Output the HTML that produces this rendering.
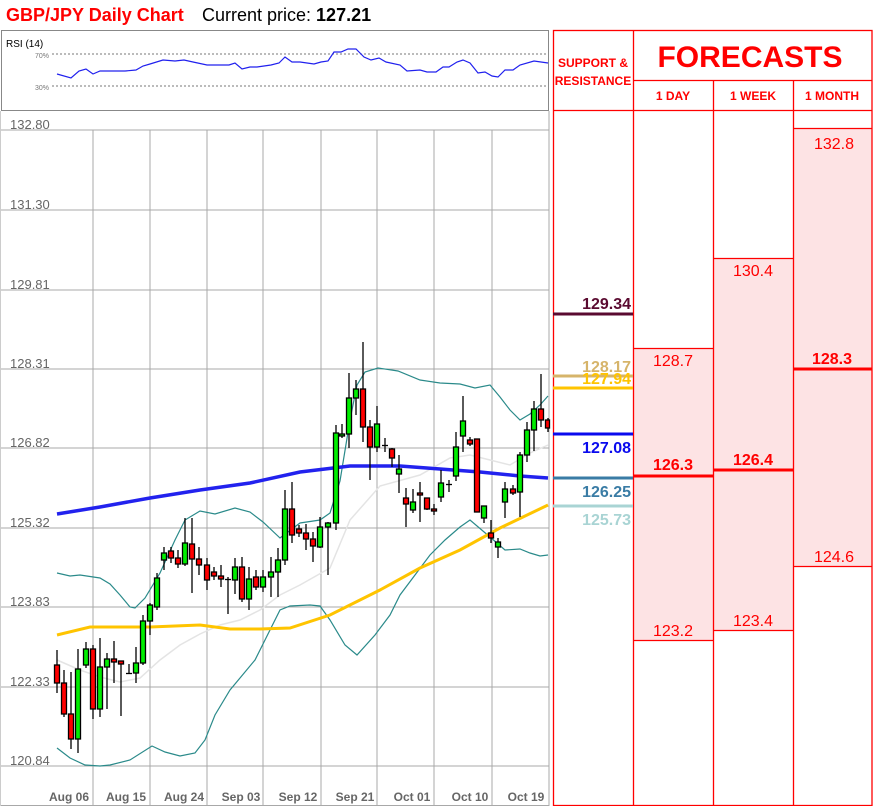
<!DOCTYPE html>
<html><head><meta charset="utf-8"><style>
body{margin:0;width:873px;height:806px;overflow:hidden;background:#fff;font-family:"Liberation Sans",sans-serif;}
</style></head><body>
<svg width="873" height="806" xmlns="http://www.w3.org/2000/svg" font-family="Liberation Sans, sans-serif">
<text x="6" y="21" font-size="18" font-weight="bold" fill="#ff0000">GBP/JPY Daily Chart</text>
<text x="202" y="21" font-size="18" fill="#000">Current price: <tspan font-weight="bold">127.21</tspan></text>
<!-- RSI -->
<rect x="1.5" y="30.5" width="547" height="80" fill="#fff" stroke="#888"/>
<text x="6" y="47" font-size="10" fill="#000">RSI (14)</text>
<line x1="52" y1="54" x2="548" y2="54" stroke="#777" stroke-dasharray="2,2"/>
<line x1="52" y1="86" x2="548" y2="86" stroke="#777" stroke-dasharray="2,2"/>
<text x="35" y="58" font-size="7" fill="#777">70%</text>
<text x="35" y="90" font-size="7" fill="#777">30%</text>
<polyline fill="none" stroke="#2020ee" stroke-width="1.2" points="57,74 71,78 79,71 86,69 93,74 100,71 125,71 136,70 143,66 150,64 163,60 175,61 184,60 193,62 207,65 229,65 235,63 242,69 250,67 257,67 271,65 279,63 285,57 292,62 300,62 314,64 321,62 328,61 334,52 341,52 348,49 356,49 364,57 371,60 379,58 386,62 400,65 407,71 420,70 427,72 436,72 443,67 449,67 457,62 463,60 470,63 478,73 485,72 492,76 498,77 505,70 513,70 520,65 534,61 548,63"/>
<!-- main chart grid -->
<g stroke="#a8a8a8" stroke-width="1">
<line x1="0" y1="130" x2="549" y2="130"/><line x1="0" y1="210" x2="549" y2="210"/><line x1="0" y1="290" x2="549" y2="290"/>
<line x1="0" y1="369" x2="549" y2="369"/><line x1="0" y1="448" x2="549" y2="448"/><line x1="0" y1="528" x2="549" y2="528"/>
<line x1="0" y1="607" x2="549" y2="607"/><line x1="0" y1="687" x2="549" y2="687"/><line x1="0" y1="766" x2="549" y2="766"/>
<line x1="93" y1="130" x2="93" y2="806"/><line x1="150" y1="130" x2="150" y2="806"/><line x1="207" y1="130" x2="207" y2="806"/>
<line x1="263" y1="130" x2="263" y2="806"/><line x1="321" y1="130" x2="321" y2="806"/><line x1="377" y1="130" x2="377" y2="806"/>
<line x1="434" y1="130" x2="434" y2="806"/><line x1="492" y1="130" x2="492" y2="806"/>
<line x1="549" y1="111" x2="549" y2="806"/><line x1="0" y1="805.5" x2="549" y2="805.5"/>
</g>
<line x1="0.5" y1="111" x2="0.5" y2="806" stroke="#ccc"/>
<g font-size="13" fill="#666">
<text x="10" y="129">132.80</text><text x="10" y="209">131.30</text><text x="10" y="289">129.81</text>
<text x="10" y="368">128.31</text><text x="10" y="447">126.82</text><text x="10" y="527">125.32</text>
<text x="10" y="606">123.83</text><text x="10" y="686">122.33</text><text x="10" y="765">120.84</text>
</g>
<g font-size="12" fill="#666" font-weight="bold" text-anchor="middle">
<text x="69" y="801">Aug 06</text><text x="126" y="801">Aug 15</text><text x="184" y="801">Aug 24</text>
<text x="241" y="801">Sep 03</text><text x="298" y="801">Sep 12</text><text x="355" y="801">Sep 21</text>
<text x="412" y="801">Oct 01</text><text x="470" y="801">Oct 10</text><text x="526" y="801">Oct 19</text>
</g>
<!-- indicator lines -->
<polyline fill="none" stroke="#e4e4e4" stroke-width="1.5" points="57,660 80,670 100,677 120,682 140,678 160,660 180,645 200,634 220,625 240,620 260,610 280,595 300,585 330,568 350,520 380,486 420,475 450,458 470,455 490,460 510,465 530,453 548,445"/>
<polyline fill="none" stroke="#2a8a8a" stroke-width="1.2" points="57,573 70,576 80,575 100,578 110,584 120,595 130,607 135,608 145,598 160,573 175,540 185,520 200,511 215,514 235,508 250,512 263,522 280,538 300,523 320,520 330,513 340,481 350,420 357,385 365,372 378,368 398,371 420,380 440,383 460,384 475,388 490,385 500,397 510,410 520,420 530,414 540,405 548,396"/>
<polyline fill="none" stroke="#2a8a8a" stroke-width="1.2" points="57,748 70,758 85,765 100,766 110,765 130,760 152,746 165,752 180,756 195,753 205,740 215,715 230,690 240,678 255,660 265,640 280,610 290,606 310,605 320,606 330,620 345,645 357,655 375,635 390,615 400,595 415,575 430,555 445,540 460,527 470,520 490,537 505,550 520,549 530,553 540,556 548,555"/>
<polyline fill="none" stroke="#ffc400" stroke-width="3" points="57,635 90,627 150,627 200,625 230,629 260,629 290,628 330,615 380,590 420,568 460,550 500,528 548,505"/>
<polyline fill="none" stroke="#2222ee" stroke-width="3.5" points="57,514 100,507 150,498 200,490 250,483 300,472 350,466 400,466 440,469 480,472 520,476 548,478"/>
<!-- candles -->
<g stroke="#000" stroke-width="1.3">
<line x1="57" y1="650" x2="57" y2="693"/><rect x="54.5" y="665" width="5" height="18" fill="#f00"/>
<line x1="64" y1="670" x2="64" y2="717"/><rect x="61.5" y="683" width="5" height="31" fill="#f00"/>
<line x1="71" y1="672" x2="71" y2="749"/><rect x="68.5" y="714" width="5" height="25" fill="#f00"/>
<line x1="78" y1="649" x2="78" y2="753"/><rect x="75.5" y="669" width="5" height="70" fill="#0e0"/>
<line x1="86" y1="642" x2="86" y2="668"/><rect x="83.5" y="649" width="5" height="16" fill="#0e0"/>
<line x1="93" y1="645" x2="93" y2="719"/><rect x="90.5" y="649" width="5" height="60" fill="#f00"/>
<line x1="100" y1="638" x2="100" y2="717"/><rect x="97.5" y="667" width="5" height="42" fill="#0e0"/>
<line x1="107" y1="653" x2="107" y2="709"/><rect x="104.5" y="659" width="5" height="8" fill="#0e0"/>
<line x1="114" y1="641" x2="114" y2="683"/><rect x="111.5" y="659" width="5" height="3" fill="#f00"/>
<line x1="121" y1="661" x2="121" y2="716"/><rect x="118.5" y="661" width="5" height="3" fill="#f00"/>
<line x1="129" y1="664" x2="129" y2="674"/><line x1="126" y1="673.5" x2="132" y2="673.5"/>
<line x1="136" y1="647" x2="136" y2="683"/><rect x="133.5" y="663" width="5" height="10" fill="#0e0"/>
<line x1="143" y1="615" x2="143" y2="665"/><rect x="140.5" y="621" width="5" height="42" fill="#0e0"/>
<line x1="150" y1="603" x2="150" y2="635"/><rect x="147.5" y="605" width="5" height="16" fill="#0e0"/>
<line x1="157" y1="573" x2="157" y2="610"/><rect x="154.5" y="578" width="5" height="29" fill="#0e0"/>
<line x1="164" y1="547" x2="164" y2="570"/><rect x="161.5" y="553" width="5" height="7" fill="#0e0"/>
<line x1="171" y1="547" x2="171" y2="563"/><rect x="168.5" y="551" width="5" height="7" fill="#f00"/>
<line x1="178" y1="550" x2="178" y2="568"/><rect x="175.5" y="558" width="5" height="6" fill="#f00"/>
<line x1="185" y1="518" x2="185" y2="566"/><rect x="182.5" y="543" width="5" height="21" fill="#0e0"/>
<line x1="192" y1="518" x2="192" y2="593"/><rect x="189.5" y="544" width="5" height="15" fill="#f00"/>
<line x1="199" y1="547" x2="199" y2="575"/><rect x="196.5" y="559" width="5" height="6" fill="#f00"/>
<line x1="207" y1="558" x2="207" y2="590"/><rect x="204.5" y="565" width="5" height="15" fill="#f00"/>
<line x1="214" y1="567" x2="214" y2="580"/><rect x="211.5" y="572" width="5" height="4" fill="#f00"/>
<line x1="221" y1="565" x2="221" y2="587"/><rect x="218.5" y="576" width="5" height="3" fill="#f00"/>
<line x1="228" y1="577" x2="228" y2="614"/><line x1="225" y1="579.5" x2="231" y2="579.5"/>
<line x1="235" y1="558" x2="235" y2="594"/><rect x="232.5" y="567" width="5" height="13" fill="#0e0"/>
<line x1="242" y1="557" x2="242" y2="602"/><rect x="239.5" y="567" width="5" height="32" fill="#f00"/>
<line x1="249" y1="567" x2="249" y2="610"/><rect x="246.5" y="579" width="5" height="20" fill="#0e0"/>
<line x1="256" y1="570" x2="256" y2="590"/><rect x="253.5" y="577" width="5" height="10" fill="#f00"/>
<line x1="263" y1="570" x2="263" y2="592"/><rect x="260.5" y="577" width="5" height="10" fill="#0e0"/>
<line x1="271" y1="557" x2="271" y2="597"/><rect x="268.5" y="572" width="5" height="5" fill="#0e0"/>
<line x1="278" y1="548" x2="278" y2="597"/><rect x="275.5" y="560" width="5" height="12" fill="#0e0"/>
<line x1="285" y1="490" x2="285" y2="565"/><rect x="282.5" y="509" width="5" height="51" fill="#0e0"/>
<line x1="292" y1="482" x2="292" y2="543"/><rect x="289.5" y="509" width="5" height="26" fill="#f00"/>
<line x1="299" y1="525" x2="299" y2="537"/><rect x="296.5" y="529" width="5" height="4" fill="#f00"/>
<line x1="306" y1="524" x2="306" y2="550"/><rect x="303.5" y="533" width="5" height="6" fill="#f00"/>
<line x1="313" y1="532" x2="313" y2="562"/><rect x="310.5" y="539" width="5" height="7" fill="#f00"/>
<line x1="320" y1="517" x2="320" y2="548"/><rect x="317.5" y="527" width="5" height="20" fill="#0e0"/>
<line x1="328" y1="522" x2="328" y2="575"/><rect x="325.5" y="523" width="5" height="4" fill="#0e0"/>
<line x1="336" y1="425" x2="336" y2="530"/><rect x="333.5" y="433" width="5" height="90" fill="#0e0"/>
<line x1="342" y1="424" x2="342" y2="438"/><rect x="339.5" y="434" width="5" height="2" fill="#0e0"/>
<line x1="349" y1="373" x2="349" y2="448"/><rect x="346.5" y="398" width="5" height="36" fill="#0e0"/>
<line x1="356" y1="380" x2="356" y2="415"/><rect x="353.5" y="389" width="5" height="9" fill="#0e0"/>
<line x1="363" y1="342" x2="363" y2="442"/><rect x="360.5" y="389" width="5" height="38" fill="#f00"/>
<line x1="370" y1="420" x2="370" y2="480"/><rect x="367.5" y="427" width="5" height="20" fill="#f00"/>
<line x1="377" y1="406" x2="377" y2="452"/><rect x="374.5" y="424" width="5" height="23" fill="#0e0"/>
<line x1="385" y1="438" x2="385" y2="452"/><line x1="382" y1="445.5" x2="388" y2="445.5"/>
<line x1="392" y1="448" x2="392" y2="467"/><rect x="389.5" y="449" width="5" height="9" fill="#f00"/>
<line x1="399" y1="455" x2="399" y2="493"/><rect x="396.5" y="469" width="5" height="5" fill="#0e0"/>
<line x1="406" y1="488" x2="406" y2="527"/><rect x="403.5" y="498" width="5" height="6" fill="#f00"/>
<line x1="413" y1="489" x2="413" y2="513"/><rect x="410.5" y="502" width="5" height="8" fill="#0e0"/>
<line x1="420" y1="482" x2="420" y2="522"/><rect x="417.5" y="493" width="5" height="2" fill="#f00"/>
<line x1="427" y1="498" x2="427" y2="510"/><rect x="424.5" y="498" width="5" height="11" fill="#f00"/>
<line x1="434" y1="504" x2="434" y2="515"/><rect x="431.5" y="509" width="5" height="2" fill="#f00"/>
<line x1="441" y1="470" x2="441" y2="502"/><rect x="438.5" y="483" width="5" height="14" fill="#0e0"/>
<line x1="449" y1="480" x2="449" y2="492"/><line x1="446" y1="484.5" x2="452" y2="484.5"/>
<line x1="456" y1="432" x2="456" y2="481"/><rect x="453.5" y="447" width="5" height="29" fill="#0e0"/>
<line x1="463" y1="396" x2="463" y2="452"/><rect x="460.5" y="421" width="5" height="15" fill="#0e0"/>
<line x1="470" y1="437" x2="470" y2="446"/><rect x="467.5" y="440" width="5" height="4" fill="#f00"/>
<line x1="477" y1="439" x2="477" y2="512"/><rect x="474.5" y="439" width="5" height="73" fill="#f00"/>
<line x1="484" y1="506" x2="484" y2="523"/><rect x="481.5" y="506" width="5" height="12" fill="#0e0"/>
<line x1="491" y1="520" x2="491" y2="543"/><rect x="488.5" y="533" width="5" height="5" fill="#f00"/>
<line x1="498" y1="538" x2="498" y2="558"/><rect x="495.5" y="542" width="5" height="5" fill="#0e0"/>
<line x1="505" y1="482" x2="505" y2="518"/><rect x="502.5" y="489" width="5" height="13" fill="#0e0"/>
<line x1="513" y1="485" x2="513" y2="495"/><rect x="510.5" y="489" width="5" height="4" fill="#f00"/>
<line x1="520" y1="452" x2="520" y2="517"/><rect x="517.5" y="455" width="5" height="37" fill="#0e0"/>
<line x1="527" y1="422" x2="527" y2="462"/><rect x="524.5" y="430" width="5" height="25" fill="#0e0"/>
<line x1="534" y1="401" x2="534" y2="451"/><rect x="531.5" y="409" width="5" height="21" fill="#0e0"/>
<line x1="541" y1="374" x2="541" y2="427"/><rect x="538.5" y="409" width="5" height="11" fill="#f00"/>
<line x1="548" y1="418" x2="548" y2="432"/><rect x="545.5" y="420" width="4" height="8" fill="#f00"/>
</g>
<!-- forecast table -->
<rect x="793" y="128" width="79" height="438" fill="#fde3e4"/>
<rect x="713" y="258" width="80" height="372" fill="#fde3e4"/>
<rect x="633" y="348" width="80" height="292" fill="#fde3e4"/>
<g stroke="#ff0000" stroke-width="1.3" fill="none">
<rect x="553.5" y="30.5" width="318.5" height="775"/>
<line x1="633.5" y1="30" x2="633.5" y2="806"/>
<line x1="633" y1="80.5" x2="872" y2="80.5"/>
<line x1="713.5" y1="80" x2="713.5" y2="806"/>
<line x1="793.5" y1="80" x2="793.5" y2="806"/>
<line x1="553" y1="110.5" x2="872" y2="110.5"/>
<line x1="793" y1="128.5" x2="872" y2="128.5"/>
<line x1="793" y1="566.5" x2="872" y2="566.5"/>
<line x1="713" y1="258.5" x2="793" y2="258.5"/>
<line x1="713" y1="630.5" x2="793" y2="630.5"/>
<line x1="633" y1="348.5" x2="713" y2="348.5"/>
<line x1="633" y1="640.5" x2="713" y2="640.5"/>
</g>
<g stroke="#ff0000" stroke-width="3">
<line x1="633" y1="476" x2="713" y2="476"/>
<line x1="713" y1="470" x2="793" y2="470"/>
<line x1="793" y1="369" x2="872" y2="369"/>
</g>
<g fill="#ff0000" font-weight="bold" text-anchor="middle">
<text x="593" y="67" font-size="12">SUPPORT &amp;</text>
<text x="593" y="85" font-size="12">RESISTANCE</text>
<text x="750" y="67" font-size="30">FORECASTS</text>
<text x="673" y="100" font-size="12">1 DAY</text>
<text x="753" y="100" font-size="12">1 WEEK</text>
<text x="832" y="100" font-size="12">1 MONTH</text>
<text x="673" y="470" font-size="16">126.3</text>
<text x="753" y="465" font-size="16">126.4</text>
<text x="832" y="364" font-size="16">128.3</text>
</g>
<g fill="#ff0000" font-size="16" text-anchor="middle">
<text x="673" y="366">128.7</text>
<text x="673" y="636">123.2</text>
<text x="753" y="276">130.4</text>
<text x="753" y="626">123.4</text>
<text x="834" y="149">132.8</text>
<text x="834" y="562">124.6</text>
</g>
<!-- S&R -->
<g stroke-width="3">
<line x1="553" y1="314" x2="633" y2="314" stroke="#5a0a30"/>
<line x1="553" y1="376" x2="633" y2="376" stroke="#d6b46a"/>
<line x1="553" y1="388" x2="633" y2="388" stroke="#ffc400"/>
<line x1="553" y1="434" x2="633" y2="434" stroke="#0a0aee"/>
<line x1="553" y1="478" x2="633" y2="478" stroke="#3a7ca5"/>
<line x1="553" y1="506" x2="633" y2="506" stroke="#a9d4d4"/>
</g>
<g font-size="16" font-weight="bold" text-anchor="end">
<text x="631" y="309" fill="#5a0a30">129.34</text>
<text x="631" y="372" fill="#d6b46a">128.17</text>
<text x="631" y="384" fill="#ffc400">127.94</text>
<text x="631" y="453" fill="#0a0aee">127.08</text>
<text x="631" y="497" fill="#3a7ca5">126.25</text>
<text x="631" y="525" fill="#a9d4d4">125.73</text>
</g>
</svg>
</body></html>
